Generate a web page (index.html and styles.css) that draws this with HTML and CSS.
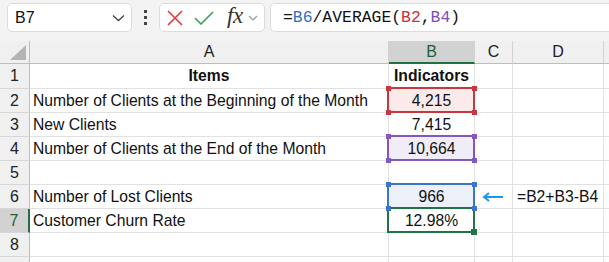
FILE: index.html
```html
<!DOCTYPE html>
<html>
<head>
<meta charset="utf-8">
<link rel="stylesheet" href="styles.css">
</head>
<body>
<div class="toolbar">
  <div class="namebox">
    <span class="name">B7</span>
    <svg class="chev" width="13" height="8" viewBox="0 0 13 8"><path d="M1 1.5 L6.5 6.5 L12 1.5" fill="none" stroke="#444" stroke-width="1.3"/></svg>
  </div>
  <div class="dots"><i></i><i></i><i></i></div>
  <div class="controls">
    <svg class="ico" width="16" height="16" viewBox="0 0 16 16"><path d="M1 1 L15 15 M15 1 L1 15" stroke="#e5383b" stroke-width="1.6" fill="none"/></svg>
    <svg class="ico" width="20" height="14" viewBox="0 0 20 14"><path d="M1 7 L7 13 L19 1" stroke="#3c9e55" stroke-width="1.6" fill="none"/></svg>
    <span class="fx">fx</span>
    <svg class="chev2" width="10" height="6" viewBox="0 0 10 6"><path d="M1 1 L5 5 L9 1" fill="none" stroke="#999" stroke-width="1.2"/></svg>
  </div>
  <div class="formula">=<span class="rb">B6</span>/AVERAGE(<span class="rr">B2</span>,<span class="rp">B4</span>)</div>
</div>
<div class="sheet">
  <div class="corner"><span class="tri"></span></div>
  <div class="ch">A</div>
  <div class="ch ch-sel">B</div>
  <div class="ch">C</div>
  <div class="ch">D</div>
  <div class="ch ch-e"></div>

  <div class="rh r1">1</div>
  <div class="c r1 bold center">Items</div>
  <div class="c r1 bold center">Indicators</div>
  <div class="c r1"></div><div class="c r1"></div><div class="c r1 e"></div>

  <div class="rh">2</div>
  <div class="c">Number of Clients at the Beginning of the Month</div>
  <div class="c center box red"><span>4,215</span><b class="k tl"></b><b class="k tr"></b><b class="k bl"></b><b class="k br"></b></div>
  <div class="c"></div><div class="c"></div><div class="c e"></div>

  <div class="rh">3</div>
  <div class="c">New Clients</div>
  <div class="c center">7,415</div>
  <div class="c"></div><div class="c"></div><div class="c e"></div>

  <div class="rh">4</div>
  <div class="c">Number of Clients at the End of the Month</div>
  <div class="c center box purple"><span>10,664</span><b class="k tl"></b><b class="k tr"></b><b class="k bl"></b><b class="k br"></b></div>
  <div class="c"></div><div class="c"></div><div class="c e"></div>

  <div class="rh">5</div>
  <div class="c"></div><div class="c"></div><div class="c"></div><div class="c"></div><div class="c e"></div>

  <div class="rh">6</div>
  <div class="c">Number of Lost Clients</div>
  <div class="c center box blue"><span>966</span><b class="k tl"></b><b class="k tr"></b><b class="k bl"></b><b class="k br"></b></div>
  <div class="c arrowcell"><svg width="22" height="10" viewBox="0 0 22 10"><path d="M21 5 H3" stroke="#1e96e8" stroke-width="2"/><path d="M7 1 L2 5 L7 9" fill="none" stroke="#1e96e8" stroke-width="2"/></svg></div>
  <div class="c note">=B2+B3-B4</div>
  <div class="c e"></div>

  <div class="rh rh-sel">7</div>
  <div class="c">Customer Churn Rate</div>
  <div class="c center box green"><span>12.98%</span><b class="k br fill"></b></div>
  <div class="c"></div><div class="c"></div><div class="c e"></div>

  <div class="rh">8</div>
  <div class="c"></div><div class="c"></div><div class="c"></div><div class="c"></div><div class="c e"></div>

  <div class="rh last"></div>
  <div class="c last"></div><div class="c last"></div><div class="c last"></div><div class="c last"></div><div class="c e last"></div>
</div>
</body>
</html>
```
FILE: styles.css
```css
* { box-sizing: border-box; }
html, body { margin: 0; padding: 0; }
body {
  width: 609px;
  height: 262px;
  overflow: hidden;
  background: #f3f3f3;
  font-family: "Liberation Sans", Arial, sans-serif;
  color: #111;
}
.toolbar {
  height: 41px;
  display: flex;
  align-items: flex-start;
  padding: 3px 0 0 7px;
}
.namebox {
  width: 125px;
  height: 29px;
  background: #fff;
  border: 1px solid #dcdcdc;
  border-radius: 5px;
  display: flex;
  align-items: center;
  justify-content: space-between;
  padding: 0 6px 0 7px;
  font-size: 16px;
}
.dots {
  width: 27px;
  height: 29px;
  display: flex;
  flex-direction: column;
  align-items: center;
  justify-content: center;
  gap: 3px;
}
.dots i {
  display: block;
  width: 3px;
  height: 3px;
  background: #444;
}
.controls {
  width: 106px;
  height: 29px;
  background: #fff;
  border: 1px solid #dcdcdc;
  border-radius: 5px;
  display: flex;
  align-items: center;
  padding: 0 0 0 7px;
}
.controls .ico:nth-child(1) { margin-right: 11px; }
.controls .ico:nth-child(2) { margin-right: 13px; margin-top: 1px; }
.fx {
  font-family: "Liberation Serif", serif;
  font-style: italic;
  font-size: 23px;
  color: #333;
  margin-top: -3px;
  letter-spacing: -0.3px;
}
.chev2 { margin-left: 5px; }
.formula {
  flex: 1;
  height: 29px;
  margin-left: 5px;
  background: #fff;
  border: 1px solid #dcdcdc;
  border-right: none;
  border-radius: 5px 0 0 5px;
  font-family: "Liberation Mono", monospace;
  font-size: 16.4px;
  line-height: 27px;
  padding-left: 12px;
  color: #111;
}
.rb { color: #2f6fc4; }
.rr { color: #c8323c; }
.rp { color: #7c4fb6; }

.sheet {
  display: grid;
  grid-template-columns: 30px 359px 86px 38px 91px 1fr;
  grid-template-rows: 23px 25px repeat(7, 24px) 6px;
  background: #fff;
  font-size: 15.7px;
}
.corner {
  background: #f0f0f0;
  border-right: 1px solid #bdbdbd;
  border-bottom: 1px solid #bdbdbd;
  position: relative;
}
.tri {
  position: absolute;
  right: 3px;
  bottom: 3px;
  width: 0;
  height: 0;
  border-left: 16px solid transparent;
  border-bottom: 15px solid #b4b4b4;
}
.ch {
  background: #f0f0f0;
  border-right: 1px solid #d2d2d2;
  border-bottom: 1px solid #bdbdbd;
  display: flex;
  align-items: center;
  justify-content: center;
  font-size: 16px;
  color: #222;
}
.ch-sel {
  background: #d2d2d2;
  border-bottom: 2px solid #1e7145;
  color: #1e5e3a;
}
.ch-e { border-right: none; }
.rh {
  background: #f0f0f0;
  border-right: 1px solid #bdbdbd;
  border-bottom: 1px solid #d6d6d6;
  display: flex;
  align-items: center;
  justify-content: center;
  font-size: 16px;
  color: #222;
}
.rh-sel {
  background: #d2d2d2;
  border-right: 2px solid #1e7145;
  color: #1e5e3a;
}
.c {
  border-right: 1px solid #e1e1e1;
  border-bottom: 1px solid #e1e1e1;
  display: flex;
  align-items: center;
  padding: 0 3px;
  white-space: nowrap;
  position: relative;
}
.last { border-bottom: none; }
.c.e { border-right: none; }
.center { justify-content: center; }
.bold { font-weight: bold; }
.box::after {
  content: "";
  position: absolute;
  left: -2px;
  top: -2px;
  right: -1px;
  bottom: -1px;
  border: 2px solid var(--bc);
  pointer-events: none;
}
.box span { position: relative; z-index: 1; }
.red { background: #fbeaea; --bc: #c8373f; }
.purple { background: #f1edf8; --bc: #8257c2; }
.blue { background: #ebf0f9; --bc: #3b74cc; }
.green { --bc: #217346; }
.k {
  position: absolute;
  width: 5px;
  height: 5px;
  background: var(--bc);
  z-index: 2;
}
.k.tl { left: -3px; top: -3px; }
.k.tr { right: -3px; top: -3px; }
.k.bl { left: -3px; bottom: -3px; }
.k.br { right: -3px; bottom: -3px; }
.k.fill { width: 6px; height: 6px; right: -3px; bottom: -3px; }
.arrowcell { justify-content: flex-start; padding: 0 0 0 7px; }
.note { padding-left: 4px; }
```
